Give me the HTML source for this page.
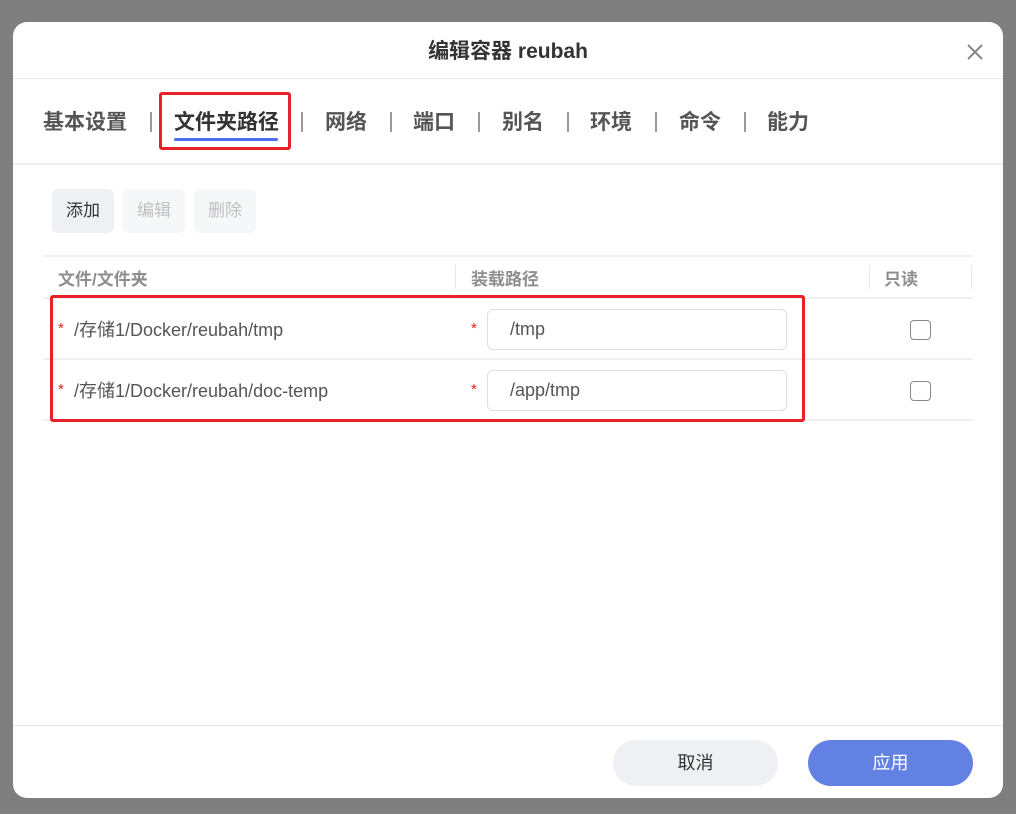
<!DOCTYPE html>
<html><head><meta charset="utf-8"><style>
*{box-sizing:border-box;margin:0;padding:0}
body{width:1016px;height:814px;background:#7f7f7f;font-family:"Liberation Sans","Noto Sans CJK SC",sans-serif;position:relative;overflow:hidden}
.abs{position:absolute}
.dlg{left:13px;top:22px;width:990px;height:776px;background:#fff;border-radius:14px;overflow:hidden}
.title{left:0;top:0;width:990px;height:57px;text-align:center;line-height:60px;font-size:21px;font-weight:bold;color:#333;border-bottom:1px solid #e6e6e6}
.close{right:18px;top:20px;width:20px;height:20px}
.tabs{left:0;top:57px;width:990px;height:86px;border-bottom:2px solid #eeeff1}
.tab{position:absolute;top:32px;font-size:21px;font-weight:bold;color:#555;line-height:24px}
.sep{position:absolute;top:33px;width:2px;height:20px;background:#999}
.btn{position:absolute;top:167px;height:44px;border-radius:6px;font-size:17px;line-height:44px;text-align:center;width:62px}
.row{position:absolute;left:30px;width:930px;border-top:2px solid #eeeff1}
.txt{position:absolute;font-size:18px;color:#555}
.star{color:#e02020;font-size:15px;position:absolute}
.inp{position:absolute;left:474px;width:300px;height:41px;border:1px solid #dcdfe6;border-radius:6px;font-size:18px;color:#555;padding-left:22px;line-height:39px}
.cb{position:absolute;left:897px;width:21px;height:20px;border:1.5px solid #888;border-radius:4px}
</style></head><body>
<div class="abs dlg">
 <div class="abs title">编辑容器 reubah</div>
 <svg class="abs close" viewBox="0 0 20 20"><path d="M3 3L17 17M17 3L3 17" stroke="#888" stroke-width="2"/></svg>
 <div class="abs tabs">
  <div class="tab" style="left:30px">基本设置</div>
  <div class="sep" style="left:137px"></div>
  <div class="tab" style="left:161px;color:#333">文件夹路径</div>
  <div class="abs" style="left:161px;top:59px;width:104px;height:3px;background:#4e6ef2;border-radius:2px"></div>
  <div class="abs" style="left:146px;top:13px;width:132px;height:58px;border:3px solid #e8202a;border-radius:3px"></div>
  <div class="sep" style="left:288px"></div>
  <div class="tab" style="left:312px">网络</div>
  <div class="sep" style="left:377px"></div>
  <div class="tab" style="left:400px">端口</div>
  <div class="sep" style="left:465px"></div>
  <div class="tab" style="left:489px">别名</div>
  <div class="sep" style="left:554px"></div>
  <div class="tab" style="left:577px">环境</div>
  <div class="sep" style="left:642px"></div>
  <div class="tab" style="left:666px">命令</div>
  <div class="sep" style="left:731px"></div>
  <div class="tab" style="left:754px">能力</div>
 </div>
 <div class="btn" style="left:39px;background:#eef0f4;color:#333">添加</div>
 <div class="btn" style="left:110px;background:#f6f7f9;color:#c0c0c0">编辑</div>
 <div class="btn" style="left:181px;background:#f6f7f9;color:#c0c0c0">删除</div>
 <div class="row" style="top:233px"></div>
 <div class="txt" style="left:45px;top:243px;font-weight:bold;color:#8e8e8e;font-size:17px">文件/文件夹</div>
 <div class="abs" style="left:442px;top:243px;width:1px;height:24px;background:#e6e6e6"></div>
 <div class="txt" style="left:458px;top:243px;font-weight:bold;color:#8e8e8e;font-size:17px">装载路径</div>
 <div class="abs" style="left:856px;top:243px;width:1px;height:24px;background:#e6e6e6"></div>
 <div class="txt" style="left:871px;top:243px;font-weight:bold;color:#8e8e8e;font-size:17px">只读</div>
 <div class="abs" style="left:958px;top:243px;width:1px;height:24px;background:#e6e6e6"></div>
 <div class="row" style="top:275px"></div>
 <div class="row" style="top:336px"></div>
 <div class="row" style="top:397px"></div>
 <span class="star" style="left:45px;top:298px">*</span>
 <div class="txt" style="left:61px;top:294px">/存储1/Docker/reubah/tmp</div>
 <span class="star" style="left:458px;top:298px">*</span>
 <div class="inp" style="top:287px">/tmp</div>
 <div class="cb" style="top:298px"></div>
 <span class="star" style="left:45px;top:359px">*</span>
 <div class="txt" style="left:61px;top:355px">/存储1/Docker/reubah/doc-temp</div>
 <span class="star" style="left:458px;top:359px">*</span>
 <div class="inp" style="top:348px">/app/tmp</div>
 <div class="cb" style="top:359px"></div>
 <div class="abs" style="left:37px;top:273px;width:755px;height:127px;border:3px solid #e8202a;border-radius:3px"></div>
 <div class="abs" style="left:0;top:703px;width:990px;height:1px;background:#e6e6e6"></div>
 <div class="abs" style="left:600px;top:718px;width:165px;height:46px;border-radius:23px;background:#eef0f4;color:#333;font-size:18px;text-align:center;line-height:46px">取消</div>
 <div class="abs" style="left:795px;top:718px;width:165px;height:46px;border-radius:23px;background:#6381e2;color:#fff;font-size:18px;text-align:center;line-height:46px">应用</div>
</div>
</body></html>
